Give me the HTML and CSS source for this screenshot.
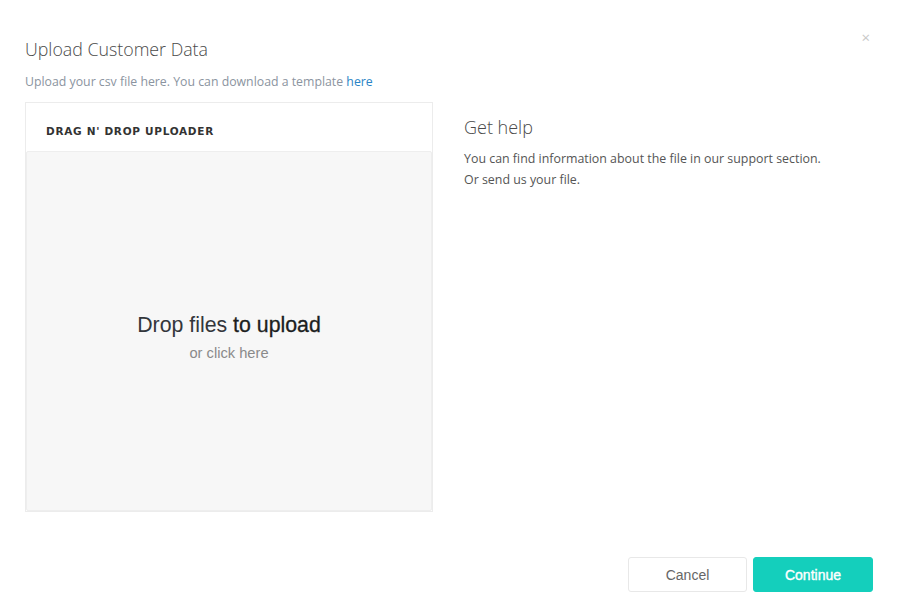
FILE: index.html
```html
<!DOCTYPE html>
<html>
<head>
<meta charset="utf-8">
<link rel="stylesheet" href="styles.css">
</head>
<body>
<div class="modal">
  <button class="close" aria-label="Close">×</button>
  <h1 class="title">Upload Customer Data</h1>
  <p class="subtitle">Upload your csv file here. You can download a template <a href="#" class="link">here</a></p>
  <div class="content">
    <div class="card">
      <div class="card-header">DRAG N' DROP UPLOADER</div>
      <div class="dropzone">
        <div class="drop-main">Drop files <span class="strong">to upload</span></div>
        <div class="drop-sub">or click here</div>
      </div>
    </div>
    <div class="help">
      <h2 class="help-title">Get help</h2>
      <p class="help-text">You can find information about the file in our support section.<br>Or send us your file.</p>
    </div>
  </div>
  <div class="footer">
    <button class="btn btn-cancel">Cancel</button>
    <button class="btn btn-continue">Continue</button>
  </div>
</div>
</body>
</html>
```
FILE: styles.css
```css
html, body {
  margin: 0;
  padding: 0;
  background: #fff;
}
body {
  font-family: "Open Sans", "Liberation Sans", sans-serif;
  width: 898px;
  height: 615px;
  overflow: hidden;
}
.modal {
  position: relative;
  padding: 36px 25px 0 25px;
}
.close {
  position: absolute;
  top: 27px;
  right: 28px;
  border: 0;
  background: none;
  padding: 0;
  font-family: "Open Sans", sans-serif;
  font-size: 15px;
  line-height: 20px;
  color: #c8c8c8;
}
.title {
  margin: 0;
  font-weight: 300;
  font-size: 17.8px;
  line-height: 26px;
  color: #4a4a4a;
}
.subtitle {
  margin: 10px 0 0 0;
  font-size: 12.3px;
  line-height: 20px;
  color: #8b94a0;
}
.link {
  color: #2a84c6;
  text-decoration: none;
}
.content {
  display: flex;
  margin-top: 10px;
}
.card {
  width: 406px;
  height: 408px;
  border: 1px solid #ececec;
  display: flex;
  flex-direction: column;
}
.card-header {
  height: 48px;
  box-sizing: border-box;
  padding: 22px 0 0 20px;
  font-family: "DejaVu Sans", sans-serif;
  font-weight: bold;
  font-size: 10.5px;
  letter-spacing: 0.7px;
  color: #333;
}
.dropzone {
  flex: 1;
  background: #f7f7f7;
  border: 1px solid #eeeeee;
  border-radius: 2px;
  display: flex;
  flex-direction: column;
  align-items: center;
  justify-content: center;
  font-family: "Liberation Sans", Arial, sans-serif;
  padding-top: 13px;
}
.drop-main {
  font-size: 21.3px;
  line-height: 24px;
  color: #33363b;
}
.strong {
  color: #1c1e21;
  font-weight: 500;
  -webkit-text-stroke: 0.3px #1c1e21;
}
.drop-sub {
  margin-top: 7px;
  font-size: 14.7px;
  line-height: 18px;
  color: #8a8a8a;
}
.help {
  padding-left: 31px;
  padding-top: 12px;
}
.help-title {
  margin: 0;
  font-weight: 300;
  font-size: 18px;
  line-height: 26px;
  color: #4a4a4a;
}
.help-text {
  margin: 8px 0 0 0;
  font-size: 12.4px;
  line-height: 21px;
  color: #555;
}
.footer {
  display: flex;
  justify-content: flex-end;
  gap: 6px;
  margin-top: 45px;
}
.btn {
  width: 120px;
  height: 35px;
  border-radius: 3px;
  font-family: "Liberation Sans", Arial, sans-serif;
  font-size: 14px;
  cursor: pointer;
}
.btn-cancel {
  width: 119px;
  background: #fff;
  border: 1px solid #e8e8e8;
  color: #666;
}
.btn-continue {
  background: #14cfbc;
  border: 1px solid #14cfbc;
  color: #fff;
  font-weight: 500;
  -webkit-text-stroke: 0.4px #fff;
}
```
